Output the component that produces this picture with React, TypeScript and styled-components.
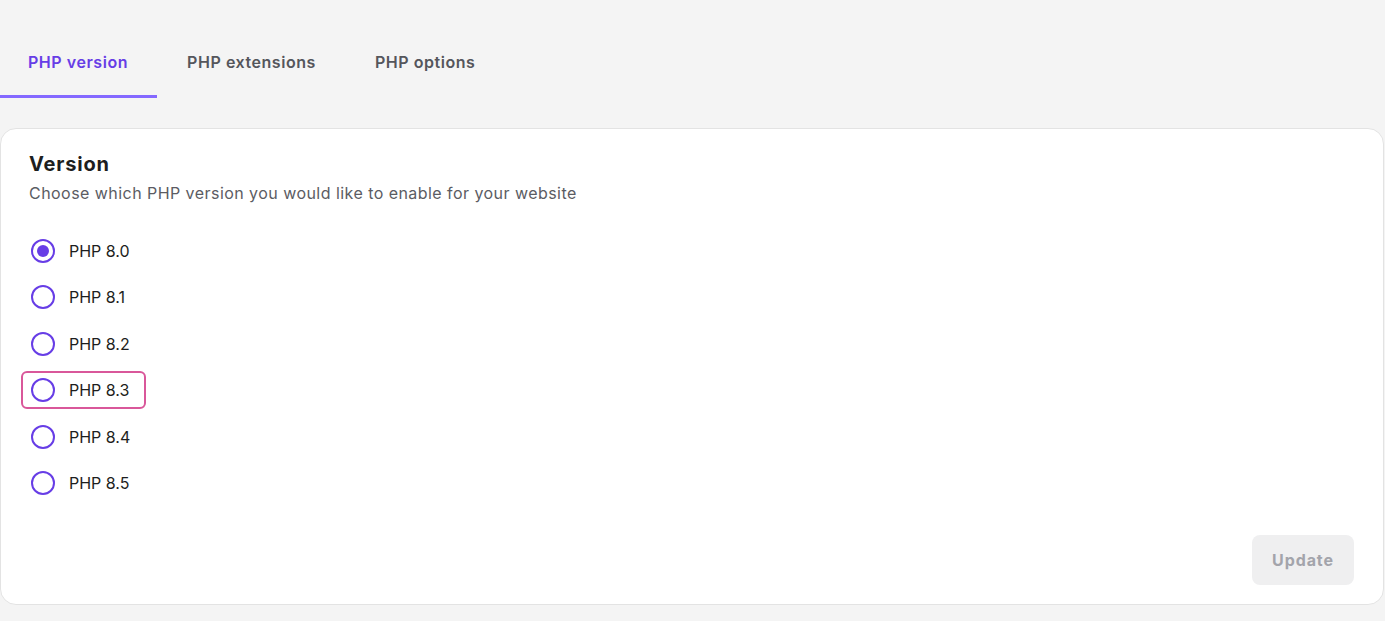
import React, { useState } from "react";
import styled, { createGlobalStyle } from "styled-components";

const GlobalStyle = createGlobalStyle`
  html, body {
    margin: 0;
    padding: 0;
    background: #f4f4f4;
  }
  body {
    font-family: Inter, "Noto Sans", "Liberation Sans", sans-serif;
    color: #1d1e20;
  }
  * { box-sizing: border-box; }
`;

const Page = styled.div`
  display: flex;
  flex-direction: column;
  padding: 30px 1px 0 0;
`;

const TabBar = styled.div`
  display: flex;
  align-items: stretch;
`;

const Tab = styled.button<{ $first?: boolean; $active?: boolean }>`
  height: 68px;
  padding: 1px 29px 2px ${(p) => (p.$first ? "28px" : "30px")};
  border: 0;
  border-bottom: 3px solid ${(p) => (p.$active ? "#8468ff" : "transparent")};
  background: transparent;
  font-family: inherit;
  font-size: 16px;
  font-weight: 600;
  letter-spacing: 0.55px;
  color: ${(p) => (p.$active ? "#673de6" : "#55565c")};
  cursor: pointer;
  display: flex;
  align-items: center;
`;

const Card = styled.section`
  margin-top: 30px;
  background: #ffffff;
  border: 1px solid #e3e3e3;
  border-radius: 16px;
  padding: 21px 29px 19px 28px;
  display: flex;
  flex-direction: column;
`;

const Title = styled.h2`
  margin: 0;
  font-size: 20px;
  line-height: 28px;
  font-weight: 650;
  letter-spacing: 0.8px;
  color: #1d1e20;
`;

const Subtitle = styled.p`
  margin: 3px 0 0;
  font-size: 16px;
  line-height: 24px;
  letter-spacing: 0.45px;
  color: #5b5c63;
`;

const OptionList = styled.div`
  margin: 27px 0 0 -8px;
  display: flex;
  flex-direction: column;
  gap: 8.4px;
  align-items: flex-start;
`;

const Option = styled.label<{ $focused?: boolean }>`
  display: inline-flex;
  align-items: center;
  gap: 14px;
  height: 38px;
  padding: 0 15px 0 8px;
  border: 2px solid ${(p) => (p.$focused ? "#d9579a" : "transparent")};
  border-radius: 6px;
  cursor: pointer;
  font-size: 16px;
  line-height: 24px;
  color: #1d1e20;
`;

const HiddenInput = styled.input`
  position: absolute;
  opacity: 0;
  width: 0;
  height: 0;
  margin: 0;
`;

const RadioCircle = styled.span<{ $checked?: boolean }>`
  width: 24px;
  height: 24px;
  border-radius: 50%;
  border: 2px solid #673de6;
  display: inline-flex;
  align-items: center;
  justify-content: center;
  flex-shrink: 0;

  &::after {
    content: "";
    width: 12px;
    height: 12px;
    border-radius: 50%;
    background: #673de6;
    display: ${(p) => (p.$checked ? "block" : "none")};
  }
`;

const Footer = styled.div`
  display: flex;
  justify-content: flex-end;
  margin-top: 33px;
`;

const UpdateButton = styled.button`
  width: 102px;
  height: 50px;
  border: 0;
  border-radius: 8px;
  background: #efeff0;
  color: #a3a4ab;
  font-family: inherit;
  font-size: 16px;
  font-weight: 700;
  letter-spacing: 0.9px;
  cursor: not-allowed;
`;

const tabs = ["PHP version", "PHP extensions", "PHP options"];
const versions = ["8.0", "8.1", "8.2", "8.3", "8.4", "8.5"];

export default function App() {
  const [activeTab, setActiveTab] = useState(0);
  const [selected, setSelected] = useState("8.0");
  const focused = "8.3";

  return (
    <>
      <GlobalStyle />
      <Page>
        <TabBar>
          {tabs.map((t, i) => (
            <Tab
              key={t}
              $first={i === 0}
              $active={i === activeTab}
              onClick={() => setActiveTab(i)}
            >
              {t}
            </Tab>
          ))}
        </TabBar>
        <Card>
          <Title>Version</Title>
          <Subtitle>Choose which PHP version you would like to enable for your website</Subtitle>
          <OptionList>
            {versions.map((v) => (
              <Option key={v} $focused={v === focused}>
                <HiddenInput
                  type="radio"
                  name="php-version"
                  value={v}
                  checked={selected === v}
                  onChange={() => setSelected(v)}
                />
                <RadioCircle $checked={selected === v} />
                PHP {v}
              </Option>
            ))}
          </OptionList>
          <Footer>
            <UpdateButton disabled>Update</UpdateButton>
          </Footer>
        </Card>
      </Page>
    </>
  );
}
